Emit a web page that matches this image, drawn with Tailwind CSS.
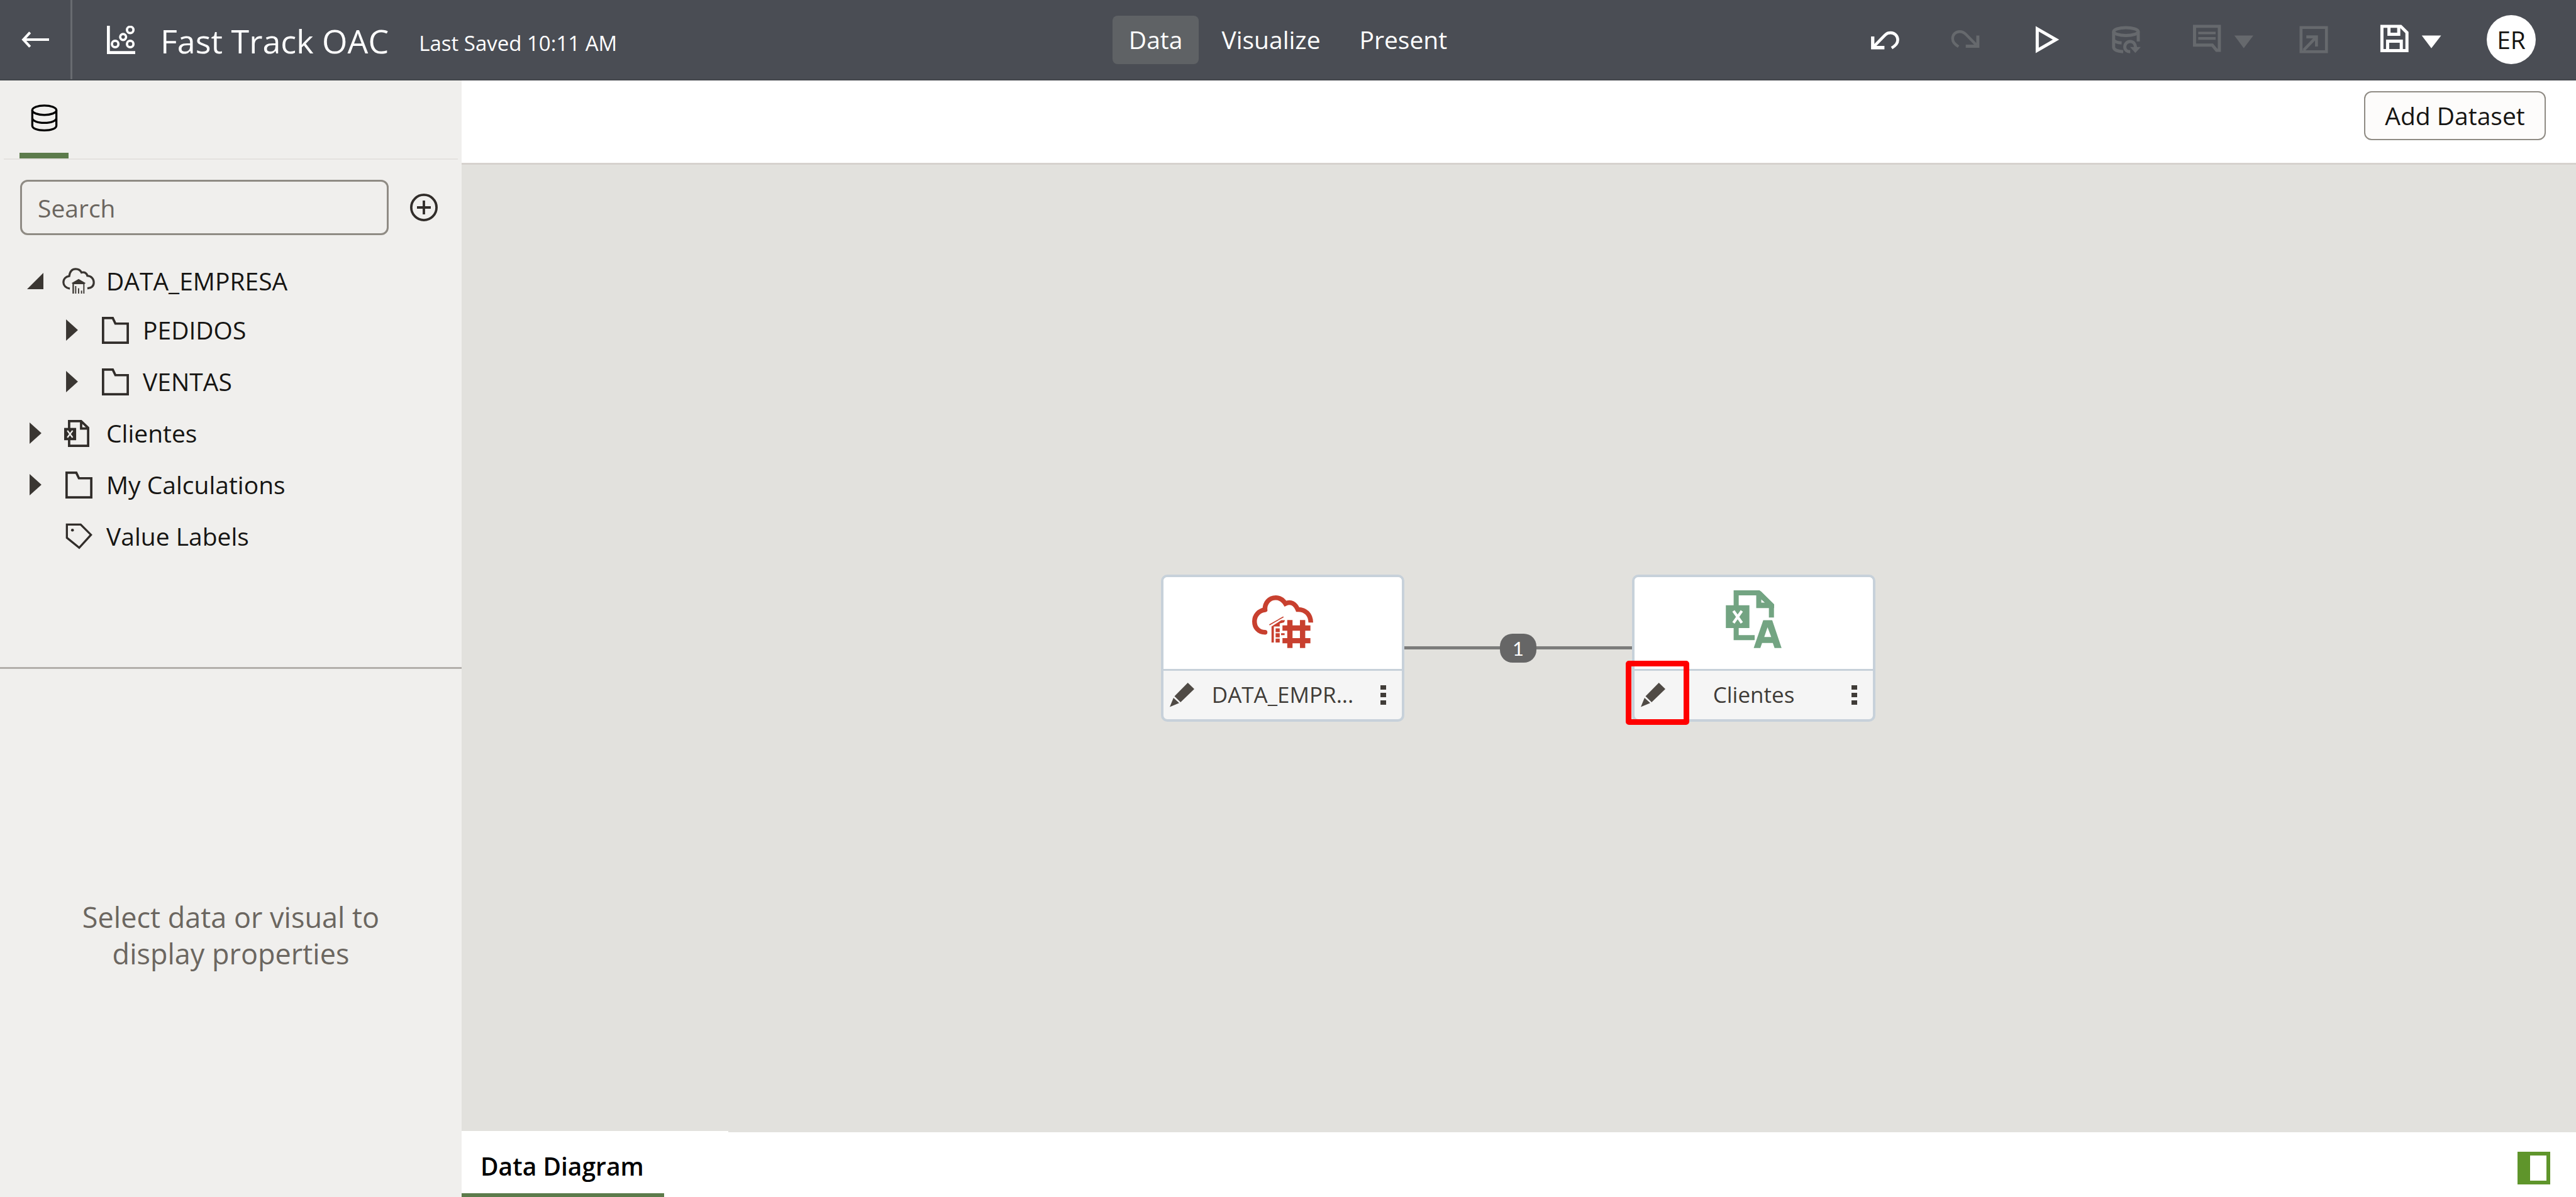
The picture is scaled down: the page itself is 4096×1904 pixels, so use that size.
<!DOCTYPE html>
<html lang="en">
<head>
<meta charset="utf-8">
<title>Fast Track OAC</title>
<script src="https://cdn.jsdelivr.net/npm/@tailwindcss/browser@4"></script>
</head>
<body class="flex h-screen flex-col overflow-hidden bg-white font-['Open_Sans',sans-serif] text-[39px] leading-[52px] text-[#161513]">

<header class="grid h-32 shrink-0 grid-cols-[1fr_auto_1fr] items-center border-b-2 border-[#43464c] bg-[#4a4d54] text-white">
  <div class="flex h-full items-center">
    <button aria-label="Back" class="flex h-full w-[115px] items-center justify-center border-r-3 border-[#686b70]">
      <svg class="h-[26px] w-[44px]" viewBox="0 0 48 28" fill="none" stroke="currentColor" stroke-width="4.5"><path d="M3 14H48M15 1.500L3.500 14L15 26.500"/></svg>
    </button>
    <svg class="ml-[55px] size-[45px]" viewBox="0 0 48 48" fill="none" stroke="currentColor" stroke-width="4"><path stroke-width="5" d="M2.500 0V45.500H48"/><circle cx="39.500" cy="7" r="5.500"/><circle cx="27.500" cy="19" r="5"/><circle cx="14" cy="31" r="5.500"/><circle cx="39.500" cy="31" r="5.500"/></svg>
    <div class="ml-10 flex items-center gap-12 pt-1">
      <h1 class="text-[52px] leading-[68px]">Fast Track OAC</h1>
      <p class="pt-2 text-[33px]">Last Saved 10:11 AM</p>
    </div>
  </div>
  <nav class="flex items-center gap-[10px]">
    <button class="h-[77px] rounded-lg bg-[#5f6265] px-[26px]">Data</button>
    <button class="h-[77px] px-[26px]">Visualize</button>
    <button class="h-[77px] px-[26px]">Present</button>
  </nav>
  <div class="flex items-center justify-end gap-[72px] pr-16">
    <div class="flex items-center gap-[82px]">
      <button aria-label="Undo"><svg class="size-[46px] overflow-visible" viewBox="38 72 148 148" fill="none" stroke="currentColor" stroke-width="15"><path stroke-width="17" d="M50 130V187H110"/><path d="M56 181L112 124C124 112 130 111 142 111C162 111 178 127 178 148C178 165 168 175 147 189"/></svg></button>
      <button aria-label="Redo" disabled class="text-[#66696d]"><svg class="size-[46px] overflow-visible" viewBox="452 72 148 148" fill="none" stroke="currentColor" stroke-width="14"><path stroke-width="16" d="M590 125V180H528"/><path d="M584 175L530 120C518 108 510 105 497 105C476 105 461 120 461 141C461 158 470 168 491 182"/></svg></button>
      <button aria-label="Preview"><svg class="size-[46px] overflow-visible" viewBox="866 72 148 148" fill="none" stroke="currentColor" stroke-width="16"><path d="M896 91L992 146L896 201Z"/></svg></button>
      <button aria-label="Refresh data" disabled class="text-[#66696d]"><svg class="size-[46px] overflow-visible" viewBox="1278 72 148 148" fill="none" stroke="currentColor" stroke-width="16"><ellipse cx="1350" cy="105" rx="63" ry="20"/><path d="M1287 105V186C1289 200 1306 206 1336 208M1413 105V156M1287 148C1294 158 1308 162 1328 163M1372 208C1358 208 1344 200 1344 184C1344 168 1356 156 1372 156C1388 156 1399 168 1399 190"/><path fill="currentColor" stroke="none" d="M1371 184H1426L1398 214Z"/></svg></button>
      <button aria-label="Comments" disabled class="flex items-center gap-5 text-[#66696d]"><svg class="size-[46px] overflow-visible" viewBox="68 72 148 148" fill="none" stroke="currentColor" stroke-width="16"><path d="M79 78H206V201H192L170 174H79Z"/><path stroke-width="13" d="M98 112H187M98 140H187"/></svg><svg class="h-[46px] w-[32px]" viewBox="284 72 102 148" fill="currentColor"><path d="M286 125H383L334 190Z"/></svg></button>
    </div>
    <div class="flex items-center gap-[82px]">
      <button aria-label="Export" disabled class="text-[#66696d]"><svg class="size-[46px] overflow-visible" viewBox="626 72 148 148" fill="none" stroke="currentColor" stroke-width="15"><path d="M635 84H765V208H635ZM662 132H714V181M648 200L712 134"/></svg></button>
      <button aria-label="Save" class="flex items-center gap-5"><svg class="size-[46px] overflow-visible" viewBox="1038 72 148 148" fill="none" stroke="currentColor" stroke-width="16"><path d="M1049 78H1145L1177 110V202H1049ZM1085 80V119H1135V80M1078 202V154H1148V202"/></svg><svg class="h-[46px] w-[32px]" viewBox="1252 72 102 148" fill="currentColor"><path d="M1254 125H1353L1303 190Z"/></svg></button>
    </div>
    <button aria-label="User menu" class="flex size-[78px] items-center justify-center rounded-full bg-white text-[#161513]">ER</button>
  </div>
</header>

<div class="flex min-h-0 flex-1">
  <aside class="flex w-[734px] shrink-0 flex-col bg-[#f0efed]">
    <div class="h-[933px] shrink-0">
      <div class="mx-[6px] flex h-[126px] border-b-2 border-[#e4e2df] pl-[25px]">
        <button aria-label="Data" class="flex w-[78px] items-center justify-center border-b-9 border-[#5c7b4b] pt-1 text-black">
          <svg class="size-[43px]" viewBox="0 0 46 46" fill="none" stroke="currentColor" stroke-width="3.500"><ellipse cx="23" cy="10" rx="20.500" ry="8"/><path d="M2.500 10V36C2.500 41 11 44.200 23 44.200S43.500 41 43.500 36V10M2.500 23C2.500 28 11 31.500 23 31.500S43.500 28 43.500 23"/></svg>
        </button>
      </div>
      <div class="mt-8 flex items-center gap-[34px] pl-8">
        <input type="search" aria-label="Search" placeholder="Search" class="h-[88px] w-[586px] rounded-xl border-3 border-[#8f8b84] bg-transparent pl-[25px] placeholder:text-[#6b6660]">
        <button aria-label="Add"><svg class="size-[44px]" viewBox="0 0 46 46" fill="none" stroke="#312d2a" stroke-width="4"><circle cx="23" cy="23" r="21"/><path d="M23 11.500V34.500M11.500 23H34.500"/></svg></button>
      </div>
      <ul class="mt-9">
        <li class="flex h-[74px] items-center pl-[42px]">
          <span class="flex w-7 justify-center"><svg class="size-[26px]" viewBox="0 0 28 28" fill="#3a3632"><path d="M28 0V28H0Z"/></svg></span>
          <span class="ml-[29px] flex w-[52px] justify-center"><svg class="h-[42px] w-[52px]" viewBox="0 0 56 45" fill="none" stroke="#3a3632" stroke-width="3.500"><path d="M13 35.500C6 34.500 2 30 2 25C2 19 6 15 12 14C13 6 17 2 23 2C28 2 31 4 33 8C38 6.500 42 9 43 13.500C50 14 54 19 54 25C54 31 50 34.500 43 35"/><g stroke="none" fill="#3a3632"><path d="M16 26L28 19L40 26L38 27.500V44H36V28H20V44H17.500V27Z"/><path d="M22 31H24V44H22ZM27 35H29V44H27ZM32 39H34V44H32Z"/></g></svg></span>
          <span class="ml-[18px]">DATA_EMPRESA</span>
        </li>
        <li class="flex h-[82px] items-center pl-[100px]">
          <span class="flex w-7 justify-center"><svg class="h-[34px] w-[19px]" viewBox="0 0 20 36" fill="#3a3632"><path d="M0 0L20 18L0 36Z"/></svg></span>
          <span class="ml-[29px] flex w-[52px] justify-center"><svg class="size-[43px]" viewBox="0 0 46 46" fill="none" stroke="#312d2a" stroke-width="4"><path d="M2 2H18.500L23 11.500H44V44H2Z"/></svg></span>
          <span class="ml-[18px]">PEDIDOS</span>
        </li>
        <li class="flex h-[82px] items-center pl-[100px]">
          <span class="flex w-7 justify-center"><svg class="h-[34px] w-[19px]" viewBox="0 0 20 36" fill="#3a3632"><path d="M0 0L20 18L0 36Z"/></svg></span>
          <span class="ml-[29px] flex w-[52px] justify-center"><svg class="size-[43px]" viewBox="0 0 46 46" fill="none" stroke="#312d2a" stroke-width="4"><path d="M2 2H18.500L23 11.500H44V44H2Z"/></svg></span>
          <span class="ml-[18px]">VENTAS</span>
        </li>
        <li class="flex h-[82px] items-center pl-[42px]">
          <span class="flex w-7 justify-center"><svg class="h-[34px] w-[19px]" viewBox="0 0 20 36" fill="#3a3632"><path d="M0 0L20 18L0 36Z"/></svg></span>
          <span class="ml-[29px] flex w-[52px] pl-[3px]"><svg class="h-[43px] w-[40px]" viewBox="0 0 43 46" fill="none" stroke="#312d2a" stroke-width="4"><path d="M8.500 2H29L41 13.500V44H8.500ZM29 2V14.500H41"/><path fill="#312d2a" stroke="none" d="M0 13.500H20.500V34.500H0Z"/><path stroke="#f0efed" stroke-width="2.500" d="M5.500 18L14.500 30M14.500 18L5.500 30"/></svg></span>
          <span class="ml-[18px]">Clientes</span>
        </li>
        <li class="flex h-[82px] items-center pl-[42px]">
          <span class="flex w-7 justify-center"><svg class="h-[34px] w-[19px]" viewBox="0 0 20 36" fill="#3a3632"><path d="M0 0L20 18L0 36Z"/></svg></span>
          <span class="ml-[29px] flex w-[52px] justify-center"><svg class="size-[43px]" viewBox="0 0 46 46" fill="none" stroke="#312d2a" stroke-width="4"><path d="M2 2H18.500L23 11.500H44V44H2Z"/></svg></span>
          <span class="ml-[18px]">My Calculations</span>
        </li>
        <li class="flex h-[82px] items-center pl-[99px]">
          <span class="flex w-[52px] justify-center"><svg class="size-[43px]" viewBox="0 0 46 46" fill="none" stroke="#312d2a" stroke-width="3.500"><path d="M2.500 2.500H26L43.500 20L23.500 42L2.500 25Z"/><circle cx="12" cy="12" r="2.500" fill="#312d2a" stroke="none"/></svg></span>
          <span class="ml-[18px]">Value Labels</span>
        </li>
      </ul>
    </div>
    <div class="flex flex-1 items-center justify-center border-t-3 border-[#b3afab] px-[100px] pt-2 text-center">
      <p class="text-[45px] leading-[58px] text-[#6b6660]">Select data or visual to display properties</p>
    </div>
  </aside>

  <main class="flex min-w-0 flex-1 flex-col">
    <div class="flex h-[134px] shrink-0 items-start justify-end border-b-3 border-[#d6d2ce] pt-[17px] pr-12">
      <button class="h-[78px] w-[289px] rounded-xl border-2 border-[#8f8b84] bg-[#fdfcfb] whitespace-nowrap">Add Dataset</button>
    </div>
    <div class="flex flex-1 items-center justify-center bg-[#e2e1dd] pr-0.5 pb-0.5">
      <section class="w-[387px] rounded-[10px] border-4 border-[#c7d1da] bg-[#f5f5f5]">
        <div class="flex h-[149px] items-start justify-center rounded-t-md border-b-3 border-[#c7d1da] bg-white pt-[29px]">
          <svg class="h-[84px] w-[97px]" viewBox="537 172 312 270" fill="none" stroke="#c8402f" stroke-width="24"><path stroke-linecap="round" d="M603 361C568 361 549 335 549 305C549 275 570 250 603 246"/><path d="M603 254C598 210 625 184 658 184C680 184 695 195 707 214C735 200 758 215 770 244C810 243 836 270 837 311"/><path d="M730 298V441M795 298V441M692 339H835M692 404H835" stroke-width="27"/><path stroke-width="5" d="M625 323L697 282"/><path fill="#c8402f" stroke="none" d="M636 331L686 299H705L700 310L678 316V331H648V413H636ZM657 341H678V360H657ZM657 366H678V387H657ZM657 393H678V413H657ZM685 366H703V375H685Z"/></svg>
        </div>
        <div class="grid h-[77px] grid-cols-[72px_1fr_72px] items-center text-[35px] leading-[48px] text-[#403c38]">
          <button aria-label="Edit DATA_EMPRESA" class="pl-[10px]"><svg class="size-[39px]" viewBox="115 615 125 125" fill="#4f4a45"><path d="M207 615L240 647L170 714L139 684ZM134 692L163 718L115 738Z"/></svg></button>
          <span class="text-center whitespace-nowrap">DATA_EMPR...</span>
          <button aria-label="More" class="ml-auto pr-[25px]"><svg class="h-[31px] w-[9px]" viewBox="0 0 9 31" fill="#403c38"><path d="M0 0H9V7H0ZM0 12H9V19H0ZM0 24H9V31H0Z"/></svg></button>
        </div>
      </section>
      <div class="flex w-[362px] items-center">
        <span class="h-[5px] flex-1 bg-[#7c7c7b]"></span>
        <span class="flex h-[46px] w-[58px] items-center justify-center rounded-[20px] bg-[#666] font-['Lato',sans-serif] text-[31px] leading-[46px] text-white">1</span>
        <span class="h-[5px] flex-1 bg-[#7c7c7b]"></span>
      </div>
      <section class="relative w-[387px] rounded-[10px] border-4 border-[#c7d1da] bg-[#f5f5f5]">
        <div class="flex h-[149px] items-start justify-center rounded-t-md border-b-3 border-[#c7d1da] bg-white pt-[21px]">
          <svg class="h-[92px] w-[89px]" viewBox="622 145 286 297" fill="none" stroke="#73a482" stroke-width="26"><path d="M675 225V158H790L856 224V285M675 335V388H770"/><path fill="#73a482" stroke="none" fill-rule="evenodd" d="M778 150H802L870 217V236H778ZM804 192V208H824ZM622 222H743V339H622Z"/><path stroke="#fff" stroke-width="14" d="M661 251L704 312M704 251L661 312"/><path fill="#fff" stroke="none" d="M778 372L768 404H778Z"/><path fill="#73a482" stroke="none" fill-rule="evenodd" d="M814 298H860L908 441H872L863 415H808L799 441H765ZM836 335L819 385H855Z"/></svg>
        </div>
        <div class="grid h-[77px] grid-cols-[72px_1fr_72px] items-center text-[35px] leading-[48px] text-[#403c38]">
          <button aria-label="Edit Clientes" class="pl-[10px]"><svg class="size-[39px]" viewBox="115 615 125 125" fill="#4f4a45"><path d="M207 615L240 647L170 714L139 684ZM134 692L163 718L115 738Z"/></svg></button>
          <span class="text-center whitespace-nowrap">Clientes</span>
          <button aria-label="More" class="ml-auto pr-[25px]"><svg class="h-[31px] w-[9px]" viewBox="0 0 9 31" fill="#403c38"><path d="M0 0H9V7H0ZM0 12H9V19H0ZM0 24H9V31H0Z"/></svg></button>
        </div>
        <div class="pointer-events-none absolute top-[133px] -left-[14px] h-[102px] w-[101px] rounded-[5px] border-9 border-[#ff0000]"></div>
      </section>
    </div>
    <div class="flex h-[103px] shrink-0 items-stretch justify-between bg-white">
      <div class="-mt-0.5 flex w-[424px] bg-white">
        <button class="w-[322px] border-b-6 border-[#5c7b4b] pt-3 pl-[30px] text-left font-semibold text-black">Data Diagram</button>
      </div>
      <button aria-label="Toggle panel" class="pt-[10px] pr-[41px]"><svg class="size-[52px]" viewBox="0 0 52 52" fill="#5f952b"><path fill-rule="evenodd" d="M0 0H52V52H0ZM20 6V46H46V6Z"/></svg></button>
    </div>
  </main>
</div>
</body>
</html>
